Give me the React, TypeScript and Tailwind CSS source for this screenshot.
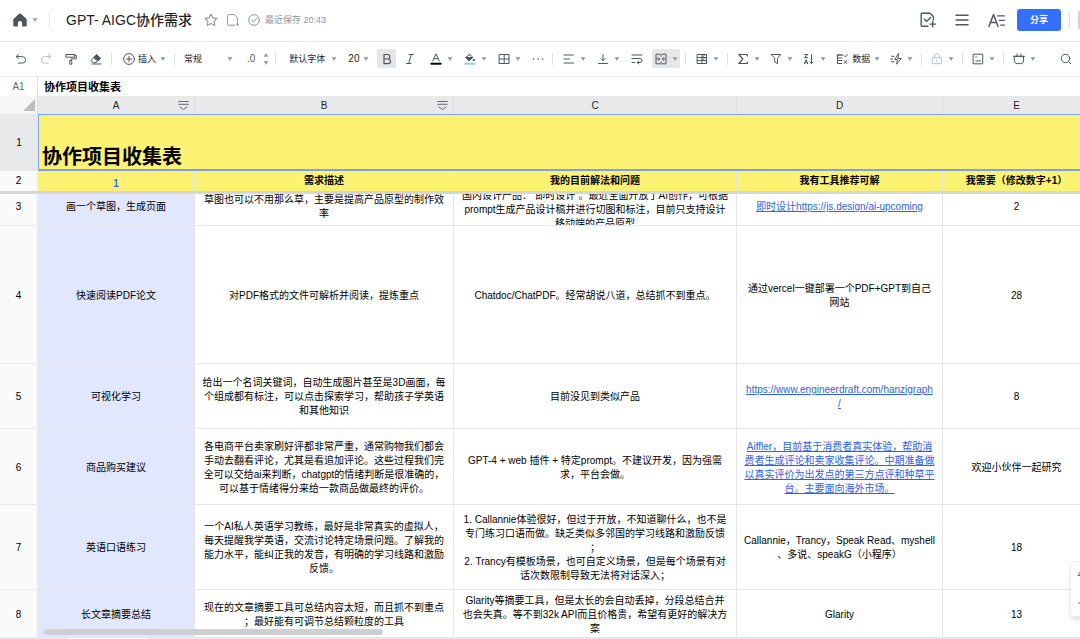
import React from "react";

type Cell = { text: string; link?: boolean };

type Row = {
  no: number;
  height: string;
  cells: Cell[];
};

const columns = [
  { name: "A", filter: true },
  { name: "B", filter: true },
  { name: "C", filter: false },
  { name: "D", filter: false },
  { name: "E", filter: false },
];

const rows: Row[] = [
  {
    no: 4,
    height: "h-[138px]",
    cells: [
      { text: "快速阅读PDF论文" },
      { text: "对PDF格式的文件可解析并阅读，提炼重点" },
      { text: "Chatdoc/ChatPDF。经常胡说八道，总结抓不到重点。" },
      { text: "通过vercel一键部署一个PDF+GPT到自己\n网站" },
      { text: "28" },
    ],
  },
  {
    no: 5,
    height: "h-[65px]",
    cells: [
      { text: "可视化学习" },
      { text: "给出一个名词关键词，自动生成图片甚至是3D画面，每\n个组成都有标注，可以点击探索学习，帮助孩子学英语\n和其他知识" },
      { text: "目前没见到类似产品" },
      { text: "https://www.engineerdraft.com/hanzigraph\n/", link: true },
      { text: "8" },
    ],
  },
  {
    no: 6,
    height: "h-[76px]",
    cells: [
      { text: "商品购买建议" },
      { text: "各电商平台卖家刷好评都非常严重，通常购物我们都会\n手动去翻看评论，尤其是看追加评论。这些过程我们完\n全可以交给ai来判断，chatgpt的情绪判断是很准确的，\n可以基于情绪得分来给一款商品做最终的评价。" },
      { text: "GPT-4 + web 插件 + 特定prompt。不建议开发，因为强需\n求，平台会做。" },
      { text: "Aiffler，目前基于消费者真实体验，帮助消\n费者生成评论和卖家收集评论。中期准备做\n以真实评价为出发点的第三方点评和种草平\n台。主要面向海外市场。", link: true },
      { text: "欢迎小伙伴一起研究" },
    ],
  },
  {
    no: 7,
    height: "h-[85px]",
    cells: [
      { text: "英语口语练习" },
      { text: "一个AI私人英语学习教练，最好是非常真实的虚拟人，\n每天提醒我学英语，交流讨论特定场景问题。了解我的\n能力水平，能纠正我的发音，有明确的学习线路和激励\n反馈。" },
      { text: "1. Callannie体验很好，但过于开放，不知道聊什么，也不是\n专门练习口语而做。缺乏类似多邻国的学习线路和激励反馈\n；\n2. Trancy有模板场景，也可自定义场景，但是每个场景有对\n话次数限制导致无法将对话深入；" },
      { text: "Callannie，Trancy，Speak Read、myshell\n、多说、speakG（小程序）" },
      { text: "18" },
    ],
  },
  {
    no: 8,
    height: "h-12",
    cells: [
      { text: "长文章摘要总结" },
      { text: "现在的文章摘要工具可总结内容太短，而且抓不到重点\n；最好能有可调节总结颗粒度的工具" },
      { text: "Glarity等摘要工具，但是太长的会自动丢掉，分段总结合并\n也会失真。等不到32k API而且价格贵，希望有更好的解决方\n案" },
      { text: "Glarity" },
      { text: "13" },
    ],
  },
];

// Row 3 is scrolled partly under the frozen header
const scrolledRow: Cell[] = [
  { text: "画一个草图，生成页面" },
  { text: "草图也可以不用那么草，主要是提高产品原型的制作效\n率" },
  { text: "国内设计产品：“即时设计”。最近全面开放了AI创作，可根据\nprompt生成产品设计稿并进行切图和标注，目前只支持设计\n移动端的产品原型" },
  { text: "即时设计https://js.design/ai-upcoming", link: true },
  { text: "2" },
];

const headings = ["需求描述", "我的目前解法和问题", "我有工具推荐可解", "我需要（修改数字+1）"];

function Icon({ children, className = "size-3", box = 12 }: { children: React.ReactNode; className?: string; box?: number }) {
  return (
    <svg
      viewBox={`0 0 ${box} ${box}`}
      className={`shrink-0 ${className}`}
      fill="none"
      stroke="currentColor"
      strokeWidth="1"
      strokeLinecap="round"
      strokeLinejoin="round"
      aria-hidden="true"
    >
      {children}
    </svg>
  );
}

function Caret() {
  return (
    <svg viewBox="0 0 6 4" className="h-1 w-[6px] shrink-0 fill-[#8f959e]" aria-hidden="true">
      <path d="M.6.300h4.800L3 3.700z" />
    </svg>
  );
}

function Divider() {
  return <span className="h-3 w-px shrink-0 bg-[#dee0e3]" />;
}

function Tool({ label, menu, children, className = "" }: { label: string; menu?: boolean; children: React.ReactNode; className?: string }) {
  return (
    <button type="button" aria-label={label} className={`flex shrink-0 items-center gap-[5px] ${className}`}>
      {children}
      {menu && <Caret />}
    </button>
  );
}

function Header() {
  return (
    <header className="flex h-[42px] shrink-0 items-center border-b border-[#e9eaec] pb-px pl-[13px] text-[#51565d]">
      <button type="button" aria-label="主页" className="flex items-center gap-[5px]">
        <svg viewBox="0 0 14 14" className="size-[14px] fill-[#4e535b]" aria-hidden="true">
          <path d="M6.2.8a1.2 1.2 0 0 1 1.6 0l5.3 4.6c.4.4.6.8.6 1.3v5.6c0 .7-.4 1.1-1.1 1.1H9.1V10a2.1 2.1 0 0 0-4.2 0v3.4H1.4c-.7 0-1.1-.4-1.1-1.1V6.7c0-.5.2-.9.6-1.3z" />
        </svg>
        <Caret />
      </button>
      <span className="ml-[11px] h-[18px] w-px bg-[#e9eaec]" />
      <h1 className="ml-4 text-[14px] leading-5 font-medium whitespace-nowrap text-[#1f2329]">GPT- AIGC协作需求</h1>
      <div className="ml-3 flex items-center gap-[9px] text-[#8f959e]">
        <button type="button" aria-label="收藏">
          <Icon className="size-[14px]" box={13}>
            <path d="M6.5.9l1.7 3.6 3.9.5-2.8 2.7.7 3.9-3.5-1.9-3.5 1.900.7-3.900L.9 5l3.900-.5z" />
          </Icon>
        </button>
        <button type="button" aria-label="移动到">
          <Icon className="size-3">
            <path d="M7.5 11.2H1.5c-.6 0-.9-.3-.9-.9V1.5c0-.6.3-.9.9-.9h5.7l3.3 3.1v3.5M10.5 8.5v2.700M9.300 10l1.200 1.200 1.200-1.200" />
          </Icon>
        </button>
        <span className="flex items-center gap-[5px] text-[9px] leading-4 whitespace-nowrap">
          <Icon className="size-3">
            <circle cx="6" cy="6" r="5.3" />
            <path d="M3.5 6.2l1.9 1.800 3.300-3.700" />
          </Icon>
          最近保存 20:43
        </span>
      </div>
      <div className="ml-auto flex items-center">
        <button type="button" aria-label="新建任务">
          <Icon className="size-4" box={16}>
            <path strokeWidth="1.4" d="M8 14.3H2.2c-.6 0-1-.3-1-1V2.2c0-.6.4-1 1-1h8l3.2 3.2v3.1M4.4 7.3l2.2 2.2 4-4M12.7 9.3v5.6M9.9 12.1h5.6" />
          </Icon>
        </button>
        <button type="button" aria-label="菜单" className="ml-[18px]">
          <Icon className="size-4" box={16}>
            <path strokeWidth="1.4" d="M2 3.2h12M2 8h12M2 12.8h12" />
          </Icon>
        </button>
        <button type="button" aria-label="样式" className="ml-[18px]">
          <Icon className="size-[17px]" box={17}>
            <path strokeWidth="1.5" d="M.9 14.4L5.5 2.5 10.1 14.4M2.5 10.4h6" />
            <path strokeWidth="1.3" d="M9.7 3.9h6.6M11.3 8.4h5M12.7 13.2h3.6" />
          </Icon>
        </button>
        <button type="button" className="ml-3 h-[22px] w-11 rounded-[3px] bg-[#3370ff] text-[9px] leading-4 font-bold text-white">分享</button>
        <span className="mx-2 h-[18px] w-px bg-[#dee0e3]" />
        <span className="h-[18px] w-[2px] bg-[#d0d3d6]" />
      </div>
    </header>
  );
}

function Toolbar() {
  return (
    <div role="toolbar" aria-label="工具栏" className="flex h-[35px] shrink-0 items-center border-b border-[#eceef0] pb-px text-[9px] leading-4 text-[#51565d]">
      <div className="flex items-center gap-[13px] pr-[9px] pl-[15px]">
        <Tool label="撤销">
          <Icon><path d="M3.5 1.5L1.2 3.6l2.3 2.2M1.4 3.6h6a3.200 3.200 0 0 1 0 6.500H3.500" /></Icon>
        </Tool>
        <Tool label="重做" className="text-[#bbbfc4]">
          <Icon><path d="M8.5 1.5l2.3 2.1-2.3 2.2M10.6 3.6h-6a3.200 3.200 0 0 0 0 6.500h3.900" /></Icon>
        </Tool>
        <Tool label="格式刷">
          <Icon><path d="M1.2 1.5h8.6v2.700H1.200zM9.800 2.500h1.500v3.400H6v1.600M5.200 7.500h1.600v3.700H5.200z" /></Icon>
        </Tool>
        <Tool label="清除格式">
          <Icon>
            <path d="M1.2 7.2L6.5 1.7l4 3.6L6 9.7H3.6z" />
            <path fill="currentColor" d="M4 4.4l2.5-2.7 4 3.6L8 8z" />
            <path d="M2 11h9" />
          </Icon>
        </Tool>
      </div>
      <Divider />
      <button type="button" className="mr-2 ml-[11px] flex shrink-0 items-center gap-[3px]">
        <Icon>
          <circle cx="6" cy="6" r="5.4" />
          <path d="M6 3.5v5M3.5 6h5" />
        </Icon>
        <span className="mr-px text-[#1f2329]">插入</span>
        <Caret />
      </button>
      <Divider />
      <div className="flex shrink-0 items-center pr-[6px] pl-[9px]">
        <label className="flex items-center">
          <select aria-label="数字格式" className="w-[43px] appearance-none bg-transparent text-[#1f2329]">
            <option>常规</option>
          </select>
          <Caret />
        </label>
        <span className="ml-[14px] text-[10px]">.0</span>
        <span className="ml-2 flex flex-col gap-1">
          <button type="button" aria-label="增加小数位" className="rotate-180"><Caret /></button>
          <button type="button" aria-label="减少小数位"><Caret /></button>
        </span>
      </div>
      <Divider />
      <div className="flex shrink-0 items-center pr-2 pl-[13px]">
        <label className="flex items-center">
          <select aria-label="字体" className="w-[42px] appearance-none bg-transparent text-[#1f2329]">
            <option>默认字体</option>
          </select>
          <Caret />
        </label>
        <label className="ml-[11px] flex items-center">
          <select aria-label="字号" className="w-[15px] appearance-none bg-transparent text-[10px] text-[#1f2329]">
            <option>20</option>
          </select>
          <Caret />
        </label>
        <Tool label="加粗" className="ml-2 size-[19px] justify-center rounded-[2px] bg-[#e4e6e8]">
          <Icon><path strokeWidth="1.2" d="M3 1.5h3.600a2.200 2.200 0 0 1 0 4.500H3zM3 6h4.200a2.300 2.300 0 0 1 0 4.600H3z" /></Icon>
        </Tool>
        <Tool label="斜体" className="ml-2">
          <Icon><path d="M5 1.5h4.500M2.500 10.500H7M7.400 1.500l-2.800 9" /></Icon>
        </Tool>
        <div className="ml-[14px] flex gap-[11px]">
          <Tool label="字体颜色" menu>
            <Icon>
              <path d="M2.7 8L6 .8 9.3 8M3.8 5.7h4.400" />
              <path stroke="#000" strokeWidth="2" strokeLinecap="butt" d="M.5 10.7h11" />
            </Icon>
          </Tool>
          <Tool label="填充颜色" menu>
            <Icon>
              <path d="M5 .8l3.8 3.5-3.6 3.5-3.4-3.5L6 1.5" />
              <path fill="currentColor" d="M2.2 4.5h6.500L5.200 7.700zM10 6.200l.7 1.200h-1.400z" />
              <path stroke="#8fd0ee" strokeWidth="2" strokeLinecap="butt" d="M.5 10.7h11" />
            </Icon>
          </Tool>
          <Tool label="边框" menu>
            <Icon><path d="M1.5 1.5h9.500v9H1.500zM6.200 1.500v9M1.500 6H11" /></Icon>
          </Tool>
          <Tool label="更多">
            <Icon><path strokeWidth="1.4" d="M1.5 6h.2M6 6h.2M10.5 6h.2" /></Icon>
          </Tool>
        </div>
      </div>
      <Divider />
      <div className="flex shrink-0 items-center gap-[11px] pr-[5px] pl-[10px]">
        <Tool label="水平对齐" menu>
          <Icon><path d="M1 2h9.500M1 6h5.500M1 10h9.500" /></Icon>
        </Tool>
        <Tool label="垂直对齐" menu>
          <Icon><path d="M6 1.5v6M3.800 5.500L6 7.700l2.200-2.200M1.500 10.500h9" /></Icon>
        </Tool>
        <Tool label="自动换行">
          <Icon><path d="M1 2h10M1 5.500h8a2 2 0 0 1 0 4H6.500M7.800 8L6.300 9.500 7.800 11M1 9.500h2.800" /></Icon>
        </Tool>
        <Tool label="合并单元格" menu className="-ml-[2px] h-[19px] w-7 justify-center rounded-[2px] bg-[#e4e6e8]">
          <Icon><path d="M4.7 1.2H1v9.600h3.700M7.300 1.200H11v9.600H7.300M6 1.200v2M6 8.800v2M1.800 6h2.700M3.500 4.700L4.800 6 3.500 7.300M10.200 6H7.500M8.500 4.700L7.200 6l1.300 1.300" /></Icon>
        </Tool>
      </div>
      <Divider />
      <Tool label="条件格式" menu className="mr-2 ml-[10px]">
        <Icon><path d="M1.5 1.5h9v9h-9zM1.500 4.500h9M1.500 7.500h9M6 1.500v9M6 4.500l3-3M6 7.500l3-3" /></Icon>
      </Tool>
      <Divider />
      <div className="flex shrink-0 items-center gap-[10px] pr-2 pl-[9px] text-[#1f2329]">
        <Tool label="求和" menu className="text-[#51565d]">
          <Icon><path strokeWidth="1.2" d="M10.300 3V1.500H1.800L5.800 6l-4 4.500h8.500V9" /></Icon>
        </Tool>
        <Tool label="筛选" menu className="text-[#51565d]">
          <Icon><path d="M1.5 1.5h9L7.500 5.600v5L4.700 9V5.600z" /></Icon>
        </Tool>
        <Tool label="排序" menu className="text-[#51565d]">
          <Icon><path d="M1.5 1.5h3.200l-3.200 3h3.200M1.500 10.800l1.600-4.300 1.600 4.300M2 9.700h2.200M8.500 1.500v9M6.900 9l1.600 1.600L10.100 9" /></Icon>
        </Tool>
        <button type="button" className="flex items-center gap-[4px]">
          <Icon className="size-3 text-[#51565d]"><path d="M5.5 2h-4v3h4.700M1 2h6M1.500 5v2.500H6M1.500 7.500v3h4.200M8.200 2.700l1.200 1.200 2-2.300M8.200 7.500l2.600 3M10.800 7.500l-2.600 3" /></Icon>
          <span>数据</span>
          <Caret />
        </button>
        <Tool label="自动化" menu className="text-[#51565d]">
          <Icon><path d="M8.3.8L4.8 6.5h2.500L6.700 11.200l4.500-5.700H8.300zM1.500 3.300h2.700M.6 6h2M1.500 8.800h2.700" /></Icon>
        </Tool>
      </div>
      <Divider />
      <Tool label="保护" menu className="mr-2 ml-[9px] text-[#bbbfc4]">
        <Icon><path d="M1.7 4.7h8.600v6H1.700zM3.700 4.500V3a2.300 2.300 0 0 1 4.600 0v1.500M6 6.700v2" /></Icon>
      </Tool>
      <Divider />
      <Tool label="表单" menu className="mr-2 ml-[9px]">
        <Icon><path d="M1.5 1.200h9.200v9.600H1.500zM3.700 4h.8M3.700 8h4.800" /></Icon>
      </Tool>
      <Divider />
      <Tool label="插件" menu className="ml-[9px]">
        <Icon><path d="M1.5 3.300h9v4.500c0 1.800-1 2.800-2.700 2.800H4.200c-1.700 0-2.700-1-2.700-2.800zM4 1v2M8 1v2M.5 3.300h11" /></Icon>
      </Tool>
      <Tool label="搜索" className="mr-2 ml-auto">
        <Icon>
          <circle cx="5.500" cy="5.500" r="4.200" />
          <path d="M8.7 8.7l2 2" />
        </Icon>
      </Tool>
    </div>
  );
}

function CellText({ cell }: { cell: Cell }) {
  if (cell.link) {
    return (
      <a href="#" className="text-[#2f62ea] underline underline-offset-1">
        {cell.text}
      </a>
    );
  }
  return <>{cell.text}</>;
}

function Sheet() {
  return (
    <table className="w-[1091px] min-w-full table-fixed border-separate border-spacing-0 text-center text-[10px] leading-[14px] whitespace-pre text-black">
      <colgroup>
        <col className="w-[38px]" />
        <col className="w-[157px]" />
        <col className="w-[259px]" />
        <col className="w-[283px]" />
        <col className="w-[206px]" />
        <col />
      </colgroup>
      <thead className="bg-[#e8e9eb] text-[#1f2329]">
        <tr>
          <th className="h-[18px] border-r border-[#dee0e3] bg-[#f5f6f7] p-0">
            <svg viewBox="0 0 12 12" className="mr-[2px] ml-auto size-3 fill-[#bbbdc1]" aria-hidden="true">
              <path d="M12 0v12H0z" />
            </svg>
          </th>
          {columns.map((col) => (
            <th key={col.name} scope="col" className="h-[18px] border-r border-[#dee0e3] p-0 pt-px font-normal">
              <div className="grid grid-cols-[1fr_auto_1fr] items-center">
                <span className="col-start-2">{col.name}</span>
                {col.filter && (
                  <button type="button" aria-label={`筛选 ${col.name}`} className="mr-[5px] justify-self-end text-[#646a73]">
                    <Icon className="size-[11px]" box={11}>
                      <path d="M.7 1.5h9.600M.7 4.300h9.600M2 7l3.500 2.500L9 7" />
                    </Icon>
                  </button>
                )}
              </div>
            </th>
          ))}
        </tr>
      </thead>
      <tbody>
        <tr className="bg-[#fcf273]">
          <th scope="row" className="h-[57px] bg-[#e8e9eb] p-0 font-normal">1</th>
          <td colSpan={5} className="h-[57px] border-t border-b-2 border-l border-[#7c9fe8] p-0 pl-[3px] text-left align-bottom text-[20px] leading-6 font-bold">
            协作项目收集表
          </td>
        </tr>
        <tr className="bg-[#fcf273]">
          <th scope="row" className="h-5 border-r border-[#e8e9eb] bg-[#f9fafb] p-0 font-normal">2</th>
          <td className="h-5 border-r border-[#e3e4e0] p-0 align-bottom font-bold text-[#3b6ae6]">1</td>
          {headings.map((heading) => (
            <td key={heading} className="h-5 border-r border-[#e3e4e0] p-0 font-bold">{heading}</td>
          ))}
        </tr>
        <tr aria-hidden="true">
          <td colSpan={6} className="h-[3px] bg-[#d5d6d7] p-0" />
        </tr>
        <tr>
          <th scope="row" className="border-r border-b border-[#e8e9eb] bg-[#f9fafb] p-0 font-normal">
            <div className="flex h-[31px] flex-col justify-end overflow-hidden">
              <div className="flex h-9 shrink-0 items-center justify-center">3</div>
            </div>
          </th>
          {scrolledRow.map((cell, index) => (
            <td key={index} className="border-r border-b border-[#e4e6ea] p-0 first-of-type:bg-[#e1e7fc]">
              <div className="flex h-[31px] flex-col justify-end overflow-hidden">
                <div className="flex h-9 shrink-0 justify-center [align-items:safe_center]">
                  <div><CellText cell={cell} /></div>
                </div>
              </div>
            </td>
          ))}
        </tr>
        {rows.map((row) => (
          <tr key={row.no}>
            <th scope="row" className="border-r border-b border-[#e8e9eb] bg-[#f9fafb] p-0 pt-[2px] font-normal">{row.no}</th>
            {row.cells.map((cell, index) => (
              <td key={index} className={`${row.height} border-r border-b border-[#e4e6ea] p-0 pt-[2px] first-of-type:bg-[#e1e7fc]`}>
                <CellText cell={cell} />
              </td>
            ))}
          </tr>
        ))}
      </tbody>
    </table>
  );
}

export default function App() {
  return (
    <div className="flex h-screen flex-col overflow-hidden bg-white font-['Liberation_Sans','Noto_Sans_CJK_SC',sans-serif]">
      <Header />
      <Toolbar />
      <div className="flex h-[19px] shrink-0 items-center">
        <input aria-label="单元格" defaultValue="A1" className="h-full w-[38px] border-r border-[#dee0e3] text-center text-[10px] text-[#646a73]" />
        <input aria-label="编辑栏" defaultValue="协作项目收集表" className="h-full flex-1 pb-[2px] pl-[6px] text-[11px] font-bold text-black" />
      </div>
      <main className="relative min-h-0 flex-1 overflow-hidden">
        <Sheet />
        <div className="absolute bottom-[3px] left-11 h-[6px] w-[339px] rounded-full bg-[#cdcfd3]" />
        <aside className="absolute -right-7 bottom-[21px] flex h-[56px] w-[38px] flex-col justify-around rounded-[4px] border border-[#eceef0] bg-white pl-[6px] text-[#646a73] shadow-md">
          <button type="button" aria-label="快捷工具">
            <Icon><path d="M4 1L1 5.500h2.500V11M4 1h4" /></Icon>
          </button>
          <button type="button" aria-label="添加">
            <Icon><path d="M1.5 6h9M6 1.500v9" /></Icon>
          </button>
        </aside>
      </main>
      <footer className="h-px shrink-0 bg-[#e8e9eb] pl-[68px]">
        <div className="h-px w-20 bg-white" />
      </footer>
    </div>
  );
}
